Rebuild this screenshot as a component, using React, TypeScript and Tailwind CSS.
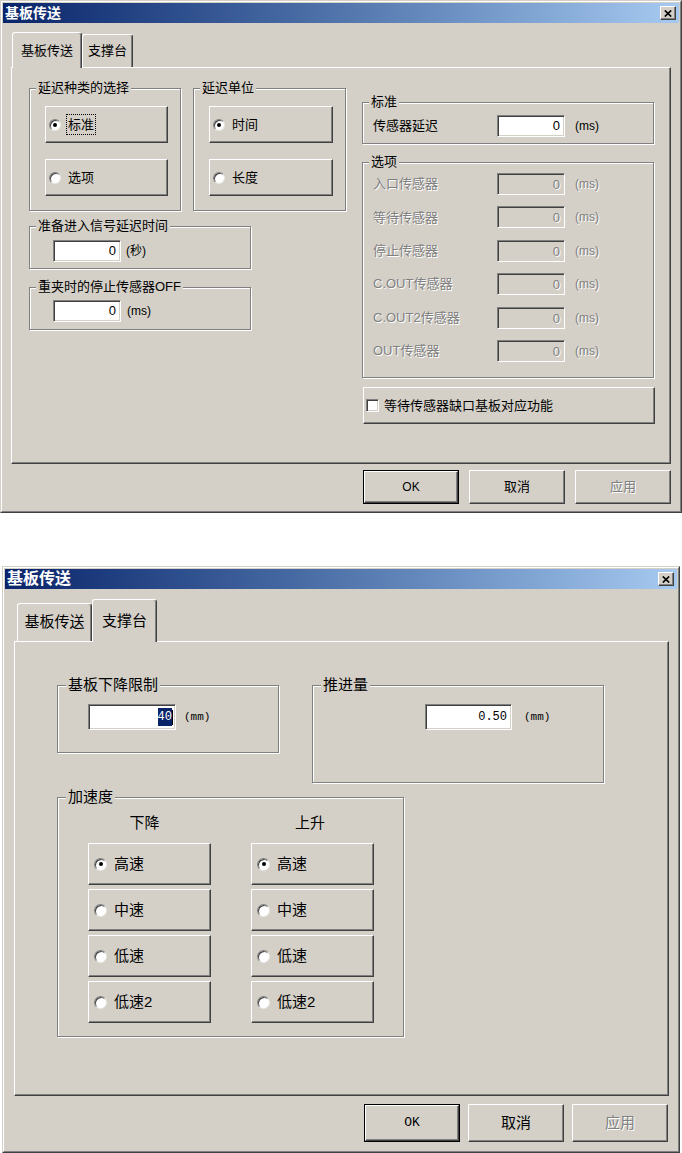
import React from 'react';

const FONT = "font-['Liberation_Sans','Noto_Sans_CJK_SC',sans-serif]";
const MONO = "font-['Liberation_Mono','Noto_Sans_CJK_SC',monospace]";

const RAISED =
  'border border-t-white border-l-white border-r-[#404040] border-b-[#404040] shadow-[inset_-1px_-1px_0_#808080]';
const SUNKEN =
  'border border-t-[#808080] border-l-[#808080] border-r-white border-b-white shadow-[inset_1px_1px_0_#404040,inset_-1px_-1px_0_#d4d0c8]';
const ETCHED = 'border border-[#808080] shadow-[inset_1px_1px_0_#fff,1px_1px_0_#fff]';
const DISABLED = 'text-[#808080] [text-shadow:1px_1px_0_#fff]';

const CloseButton: React.FC = () => (
  <div className={`flex h-[14px] w-[16px] items-center justify-center bg-[#d4d0c8] ${RAISED}`}>
    <svg width="8" height="7" viewBox="0 0 8 7">
      <path d="M0.8 0.5 L7.2 6.5 M7.2 0.5 L0.8 6.5" stroke="#000" strokeWidth="1.7" />
    </svg>
  </div>
);

const TitleBar: React.FC<{ text: string }> = ({ text }) => (
  <div className="flex h-[20px] items-center justify-between bg-linear-to-r from-[#0a246a] to-[#a6caf0] pl-[2px] pr-[3px]">
    <span className={`${text} font-bold leading-none text-white`}>基板传送</span>
    <CloseButton />
  </div>
);

const Group: React.FC<{ label: string; className?: string; legend: string; children?: React.ReactNode }> = ({
  label,
  className = '',
  legend,
  children,
}) => (
  <fieldset className={`min-w-0 ${ETCHED} ${className}`}>
    <legend className={`bg-[#d4d0c8] px-[2px] ${legend}`}>{label}</legend>
    {children}
  </fieldset>
);

const Radio: React.FC<{ checked?: boolean; size: string }> = ({ checked, size }) => (
  <span
    className={`flex shrink-0 items-center justify-center rounded-full border border-t-[#808080] border-l-[#808080] border-r-[#e8e6e2] border-b-[#e8e6e2] bg-white shadow-[inset_1px_1px_0_#404040] ${size}`}
  >
    {checked && <span className="h-[4px] w-[4px] rounded-full bg-black" />}
  </span>
);

const RadioButton: React.FC<{
  label: string;
  checked?: boolean;
  focused?: boolean;
  className: string;
  radio: string;
  gap: string;
}> = ({ label, checked, focused, className, radio, gap }) => (
  <div className={`flex items-center ${RAISED} ${className}`}>
    <Radio checked={checked} size={radio} />
    <span className={`${gap} ${focused ? 'border border-dotted border-black px-[1px]' : ''}`}>{label}</span>
  </div>
);

const Input: React.FC<{ value: string; disabled?: boolean; className: string }> = ({ value, disabled, className }) => (
  <div
    className={`flex justify-end pr-[4px] ${SUNKEN} ${disabled ? `bg-[#d4d0c8] items-start pt-[1px] ${DISABLED}` : 'bg-white items-center'} ${className}`}
  >
    {value}
  </div>
);

const Tab: React.FC<{ label: string; selected?: boolean; className: string }> = ({ label, selected, className }) => (
  <div
    className={`flex items-center justify-center rounded-t-[3px] border-t border-l border-r border-t-white border-l-white border-r-[#404040] bg-[#d4d0c8] shadow-[inset_-1px_0_0_#808080] ${selected ? 'relative z-10 -mb-[1px]' : ''} ${className}`}
  >
    {label}
  </div>
);

const Frame: React.FC<{ className: string; children: React.ReactNode }> = ({ className, children }) => (
  <div
    className={`border border-t-[#d4d0c8] border-l-[#d4d0c8] border-r-[#404040] border-b-[#404040] bg-[#d4d0c8] ${className}`}
  >
    <div className="flex h-full flex-col border border-t-white border-l-white border-r-[#808080] border-b-[#808080] p-[1px]">
      {children}
    </div>
  </div>
);

const optionRows = ['入口传感器', '等待传感器', '停止传感器', 'C.OUT传感器', 'C.OUT2传感器', 'OUT传感器'];

const Dialog1: React.FC = () => (
  <Frame className="h-[513px] w-[682px] text-[13px] text-black">
    <TitleBar text="text-[14px]" />

    <div className="ml-[9px] mt-[9px] flex h-[35px] items-end">
      <Tab label="基板传送" selected className="h-[36px] w-[70px]" />
      <Tab label="支撑台" className="h-[33px] w-[51px]" />
    </div>

    <div className={`ml-[8px] flex h-[397px] w-[660px] items-start pl-[17px] pt-[13px] ${RAISED}`}>
      {/* left column */}
      <div className="flex w-[317px] flex-col">
        <div className="flex gap-[12px]">
          <Group label="延迟种类的选择" legend="ml-[6px] leading-[14px]" className="h-[130px] w-[152px]">
            <div className="flex flex-col gap-[16px] pl-[15px] pt-[11px]">
              <RadioButton label="标准" checked focused className="h-[37px] w-[123px] pl-[3px]" radio="h-[12px] w-[12px]" gap="ml-[5px]" />
              <RadioButton label="选项" className="h-[37px] w-[123px] pl-[3px]" radio="h-[12px] w-[12px]" gap="ml-[7px]" />
            </div>
          </Group>
          <Group label="延迟单位" legend="ml-[6px] leading-[14px]" className="h-[130px] w-[153px]">
            <div className="flex flex-col gap-[16px] pl-[15px] pt-[11px]">
              <RadioButton label="时间" checked className="h-[37px] w-[124px] pl-[3px]" radio="h-[12px] w-[12px]" gap="ml-[7px]" />
              <RadioButton label="长度" className="h-[37px] w-[124px] pl-[3px]" radio="h-[12px] w-[12px]" gap="ml-[7px]" />
            </div>
          </Group>
        </div>

        <Group label="准备进入信号延迟时间" legend="ml-[6px] leading-[14px]" className="mt-[8px] h-[50px] w-[222px]">
          <div className="flex items-center pl-[23px] pt-[7px]">
            <Input value="0" className="h-[22px] w-[68px]" />
            <span className="ml-[5px] text-[12px]">(秒)</span>
          </div>
        </Group>

        <Group label="重夹时的停止传感器OFF" legend="ml-[6px] leading-[14px]" className="mt-[11px] h-[50px] w-[222px]">
          <div className="flex items-center pl-[23px] pt-[6px]">
            <Input value="0" className="h-[22px] w-[68px]" />
            <span className="ml-[6px] text-[12px]">(ms)</span>
          </div>
        </Group>
      </div>

      {/* right column */}
      <div className="ml-[16px] mt-[14px] flex w-[293px] flex-col">
        <Group label="标准" legend="ml-[6px] leading-[14px]" className="h-[49px] w-[292px]">
          <div className="flex items-center pl-[10px] pt-[6px]">
            <span className="w-[124px]">传感器延迟</span>
            <Input value="0" className="h-[22px] w-[68px]" />
            <span className="ml-[10px] text-[12px]">(ms)</span>
          </div>
        </Group>

        <Group label="选项" legend="ml-[6px] leading-[14px]" className="mt-[11px] h-[223px] w-[292px]">
          <div className="flex flex-col gap-[11.4px] pl-[10px] pt-[4px]">
            {optionRows.map((r) => (
              <div key={r} className="flex h-[22px] items-center">
                <span className={`w-[124px] ${DISABLED}`}>{r}</span>
                <Input value="0" disabled className="h-[22px] w-[68px]" />
                <span className={`ml-[10px] text-[12px] ${DISABLED}`}>(ms)</span>
              </div>
            ))}
          </div>
        </Group>

        <div className={`ml-[1px] mt-[9px] flex h-[37px] w-[292px] items-center pl-[2px] ${RAISED}`}>
          <span className={`h-[13px] w-[13px] bg-white ${SUNKEN}`} />
          <span className="ml-[5px]">等待传感器缺口基板对应功能</span>
        </div>
      </div>
    </div>

    <div className="mr-[8px] mt-[6px] flex justify-end gap-[10px]">
      <div className="h-[34px] w-[96px] border border-black">
        <div className={`flex h-full w-full items-center justify-center text-[12px] ${RAISED}`}>OK</div>
      </div>
      <div className={`flex h-[34px] w-[96px] items-center justify-center ${RAISED}`}>取消</div>
      <div className={`flex h-[34px] w-[96px] items-center justify-center ${RAISED} ${DISABLED}`}>应用</div>
    </div>
  </Frame>
);

const speeds = ['高速', '中速', '低速', '低速2'];

const Dialog2: React.FC = () => (
  <Frame className="ml-[2px] mt-[53px] h-[587px] w-[678px] text-[15px] text-black">
    <TitleBar text="text-[16px]" />

    <div className="ml-[12px] mt-[10px] flex h-[42px] items-end">
      <Tab label="基板传送" className="h-[38px] w-[75px]" />
      <Tab label="支撑台" selected className="h-[43px] w-[65px]" />
    </div>

    <div className={`ml-[9px] flex h-[455px] w-[655px] flex-col pl-[42px] pt-[35px] ${RAISED}`}>
      <div className="flex items-start">
        <Group label="基板下降限制" legend="ml-[8px] leading-[16px]" className="h-[76px] w-[222px]">
          <div className="flex items-center pl-[30px] pt-[11px]">
            <div className={`flex h-[26px] w-[88px] items-center justify-end bg-white pr-[2px] ${SUNKEN} ${MONO} text-[12px]`}>
              <span className="bg-[#0a246a] text-white">40</span>
              <span className="h-[15px] w-[1px] bg-black" />
            </div>
            <span className={`ml-[8px] ${MONO} text-[11px]`}>(mm)</span>
          </div>
        </Group>

        <Group label="推进量" legend="ml-[8px] leading-[16px]" className="ml-[33px] h-[106px] w-[292px]">
          <div className="flex items-center pl-[112px] pt-[11px]">
            <div className={`flex h-[26px] w-[87px] items-center justify-end bg-white pr-[4px] ${SUNKEN} ${MONO} text-[12px]`}>
              0.50
            </div>
            <span className={`ml-[12px] ${MONO} text-[11px]`}>(mm)</span>
          </div>
        </Group>
      </div>

      <Group label="加速度" legend="ml-[8px] leading-[16px]" className="mt-[6px] h-[248px] w-[347px]">
        <div className="pl-[30px] pt-[10px]">
          <div className="flex h-[16px] items-center leading-[16px]">
            <span className="w-[113px] text-center">下降</span>
            <span className="ml-[50px] w-[118px] text-center">上升</span>
          </div>
          <div className="mt-[12px] grid w-[286px] grid-cols-[123px_123px] gap-x-[40px] gap-y-[4px]">
            {speeds.map((s, i) => (
              <React.Fragment key={s}>
                <RadioButton
                  label={s}
                  checked={i === 0}
                  className="h-[42px] w-[123px] pl-[5px]"
                  radio="h-[13px] w-[13px]"
                  gap="ml-[7px]"
                />
                <RadioButton
                  label={s}
                  checked={i === 0}
                  className="h-[42px] w-[123px] pl-[5px]"
                  radio="h-[13px] w-[13px]"
                  gap="ml-[7px]"
                />
              </React.Fragment>
            ))}
          </div>
        </div>
      </Group>
    </div>

    <div className="mr-[9px] mt-[8px] flex justify-end gap-[8px]">
      <div className="h-[38px] w-[96px] border border-black">
        <div className={`flex h-full w-full items-center justify-center ${MONO} text-[13px] ${RAISED}`}>OK</div>
      </div>
      <div className={`flex h-[38px] w-[96px] items-center justify-center ${RAISED}`}>取消</div>
      <div className={`flex h-[38px] w-[96px] items-center justify-center ${RAISED} ${DISABLED}`}>应用</div>
    </div>
  </Frame>
);

export default function App() {
  return (
    <div className={`${FONT} min-h-[1153px] w-[682px] bg-white`}>
      <Dialog1 />
      <Dialog2 />
    </div>
  );
}
